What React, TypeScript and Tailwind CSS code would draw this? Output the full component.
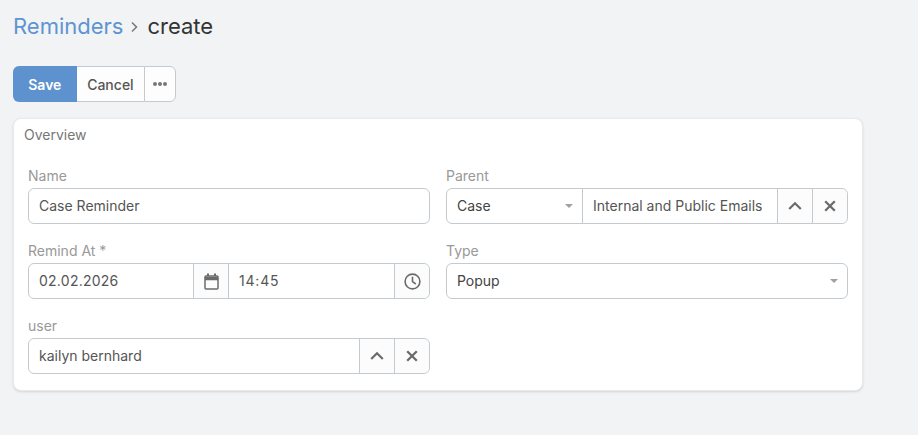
import React from 'react'

const border = "border-[#c4cbd0]"

const Chevron = () => (
    <svg width="14" height="14" viewBox="0 0 14 14" fill="none" stroke="#6b6b6b" strokeWidth="2.2">
        <path d="M1.2 10 L7 4.2 L12.8 10" />
    </svg>
)

const Cross = () => (
    <svg width="12" height="12" viewBox="0 0 12 12" fill="none" stroke="#6b6b6b" strokeWidth="2.3">
        <path d="M1.2 1.2 L10.8 10.8 M10.8 1.2 L1.2 10.8" />
    </svg>
)

const Caret = () => <span className="w-0 h-0 border-x-[4px] border-x-transparent border-t-[4px] border-t-[#a0a0a0]" />

const IconButton = ({ children, last }: { children: React.ReactNode; last?: boolean }) => (
    <div className={`w-[35px] shrink-0 flex items-center justify-center bg-[#fcfcfc] border-l ${border} ${last ? "rounded-r-[6px]" : ""}`}>
        {children}
    </div>
)

const Field = ({ label, children }: { label: string; children: React.ReactNode }) => (
    <div className="h-[75px]">
        <div className="h-[24px] pt-[1px] text-[14px] leading-[22px] text-[#999]">{label}</div>
        <div className={`flex h-[36px] bg-white border ${border} rounded-[6px] text-[14px] leading-[20px] text-[#555]`}>
            {children}
        </div>
    </div>
)

const App = () => {
    return (
        <main className="w-[918px] h-[435px] overflow-hidden bg-[#f1f3f5] px-[13px] font-['Inter',sans-serif]">
            <div className="flex items-center h-[66px] pb-[13px] text-[22px]">
                <span className="text-[#5e94d2]">Reminders</span>
                <svg className="ml-[7px] mr-[8px]" width="9" height="12" viewBox="0 0 9 12" fill="none" stroke="#777" strokeWidth="1.5">
                    <path d="M2 1.5 L6.5 6 L2 10.5" />
                </svg>
                <span className="text-[#333]">create</span>
            </div>

            <div className="flex h-[36px] w-[163px] text-[14px]">
                <button className="w-[64px] rounded-l-[6px] bg-[#5e92cf] text-white font-semibold">Save</button>
                <button className={`w-[68px] bg-[#fdfdfd] border-y ${border} text-[#555] font-medium`}>Cancel</button>
                <button className={`w-[32px] flex items-center justify-center gap-[1.5px] bg-[#fdfdfd] border ${border} rounded-r-[6px]`}>
                    <span className="w-[3.5px] h-[3.5px] rounded-full bg-[#777]" />
                    <span className="w-[3.5px] h-[3.5px] rounded-full bg-[#777]" />
                    <span className="w-[3.5px] h-[3.5px] rounded-full bg-[#777]" />
                </button>
            </div>

            <section className="mt-[16px] w-[850px] h-[273px] bg-white rounded-[8px] border border-[#e8eaec] shadow-sm">
                <h2 className="pl-[10px] pt-[6px] h-[45px] text-[14px] leading-[20px] text-[#777]">Overview</h2>
                <div className="grid grid-cols-2 gap-x-[16px] px-[14px]">
                    <Field label="Name">
                        <div className="flex-1 flex items-center px-[10px] pb-[1px]">Case Reminder</div>
                    </Field>
                    <Field label="Parent">
                        <div className={`w-[136px] shrink-0 flex items-center justify-between pl-[10px] pr-[9px] pb-[1px] text-[#444] border-r ${border}`}>
                            Case <Caret />
                        </div>
                        <div className="flex-1 flex items-center px-[10px] pb-[1px] whitespace-nowrap overflow-hidden">Internal and Public Emails</div>
                        <IconButton><Chevron /></IconButton>
                        <IconButton last><Cross /></IconButton>
                    </Field>
                    <Field label="Remind At *">
                        <div className="flex-1 flex items-center px-[10px] pb-[1px] tracking-[0.25px]">02.02.2026</div>
                        <IconButton>
                            <svg width="15" height="17" viewBox="0 0 15 17" fill="none" stroke="#6b6b6b" strokeWidth="1.5">
                                <rect x="1" y="3" width="13" height="13" rx="1" />
                                <path d="M1 5.5 H14" strokeWidth="3.5" />
                                <path d="M4 0.5 V3 M11 0.5 V3" strokeWidth="2" />
                            </svg>
                        </IconButton>
                        <div className={`w-[166px] shrink-0 flex items-center px-[10px] pb-[1px] tracking-[0.8px] border-l ${border}`}>14:45</div>
                        <IconButton last>
                            <svg width="17" height="17" viewBox="0 0 17 17" fill="none" stroke="#6b6b6b" strokeWidth="1.6">
                                <circle cx="8.5" cy="8.5" r="7.4" />
                                <path d="M8.5 3.8 V8.7 L11.8 11" />
                            </svg>
                        </IconButton>
                    </Field>
                    <Field label="Type">
                        <div className="flex-1 flex items-center justify-between pl-[10px] pr-[9px] pb-[1px] text-[#444]">
                            Popup <Caret />
                        </div>
                    </Field>
                    <Field label="user">
                        <div className="flex-1 flex items-center px-[10px] pb-[1px]">kailyn bernhard</div>
                        <IconButton><Chevron /></IconButton>
                        <IconButton last><Cross /></IconButton>
                    </Field>
                </div>
            </section>
        </main>
    )
}

export default App
